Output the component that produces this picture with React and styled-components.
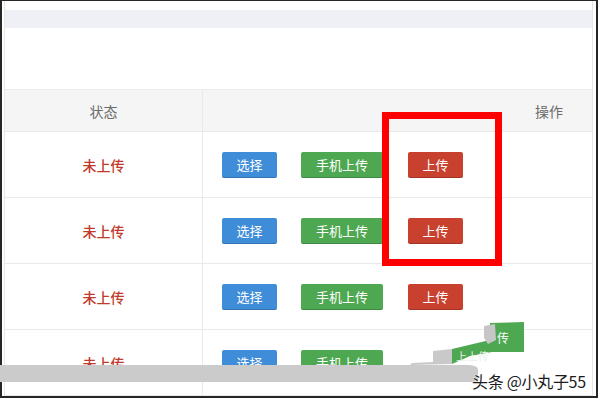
import React from "react"
import styled, { createGlobalStyle } from "styled-components"

const GlobalStyle = createGlobalStyle`
  html, body {
    margin: 0;
    width: 600px;
    height: 400px;
    overflow: hidden;
    background: #fff;
  }
  body {
    font-family: "Noto Sans CJK SC", "Noto Sans", sans-serif;
  }
`

const Frame = styled.div`
  position: relative;
  box-sizing: border-box;
  width: 598px;
  height: 398px;
  border: 2px solid #262626;
  border-top-width: 1px;
  padding: 0 3px 0 2px;
  background: #fff;
  display: flex;
`

const Panel = styled.div`
  flex: 1;
  display: flex;
  flex-direction: column;
  border-left: 1px solid #e6e6e6;
  border-right: 1px solid #e6e6e6;
  overflow: hidden;
`

const TopBand = styled.div`
  margin-top: 9px;
  height: 18px;
  background: #eff0f5;
`

const TableWrap = styled.div`
  margin-top: 61px;
  flex: 1;
  overflow: hidden;
`

const Row = styled.div`
  display: grid;
  grid-template-columns: 197px 690px;
  width: 887px;
  height: ${p => (p.$head ? "41px" : "65px")};
  background: ${p => (p.$head ? "#f5f5f5" : "#fff")};
  border-top: ${p => (p.$head ? "1px solid #ececec" : "none")};
  border-bottom: 1px solid #e9e9e9;
`

const Cell = styled.div`
  display: flex;
  align-items: center;
  justify-content: ${p => (p.$ops ? "flex-start" : "center")};
  padding-left: ${p => (p.$ops ? "19px" : "0")};
  border-left: ${p => (p.$ops ? "1px solid #e9e9e9" : "none")};
  gap: 24px;
`

const HeadText = styled.span`
  font-size: 14px;
  color: #6a6a6a;
  ${p => p.$ops && "margin-left: 313px;"}
`

const Status = styled.span`
  font-size: 14px;
  color: #bf3a2b;
  font-weight: 500;
`

const colors = {
  blue: "#3f8dd8",
  green: "#4ea751",
  red: "#c8412f",
}

const Button = styled.button`
  box-sizing: border-box;
  height: 26px;
  width: ${p => p.$w}px;
  padding: 0;
  margin-left: ${p => p.$shift || 0}px;
  border: none;
  border-radius: 2px;
  background: ${p => colors[p.$tone]};
  box-shadow: inset 0 -1px 0 rgba(0, 0, 0, 0.18);
  color: #fff;
  font-family: inherit;
  font-size: 13px;
  line-height: 26px;
`

const Highlight = styled.div`
  position: absolute;
  left: 380px;
  top: 111px;
  width: 120px;
  height: 154px;
  box-sizing: border-box;
  border: 7px solid #ff0000;
`

const GreyBar = styled.div`
  position: absolute;
  left: -2px;
  top: 364px;
  width: 478px;
  height: 17px;
  background: #cbcbcb;
  border-top-right-radius: 10px 4px;
`

const Smear = styled.svg`
  position: absolute;
  left: 398px;
  top: 317px;
  width: 130px;
  height: 50px;
  overflow: visible;
`

const Watermark = styled.div`
  position: absolute;
  left: 470px;
  top: 369px;
  font-size: 16px;
  line-height: 22px;
  letter-spacing: -0.3px;
  color: #1c1c1c;
  text-shadow: 0 0 2px #fff, 0 0 1px #fff;
  white-space: nowrap;
`

const rows = [true, true, true, false]

const App = () => (
  <>
    <GlobalStyle />
    <Frame>
      <Panel>
        <TopBand />
        <TableWrap>
          <Row $head>
            <Cell><HeadText>状态</HeadText></Cell>
            <Cell $ops><HeadText $ops>操作</HeadText></Cell>
          </Row>
          {rows.map((upload, i) => (
            <Row key={i}>
              <Cell><Status>未上传</Status></Cell>
              <Cell $ops>
                <Button $tone="blue" $w={55}>选择</Button>
                <Button $tone="green" $w={82}>手机上传</Button>
                {upload && <Button $tone="red" $w={55} $shift={1}>上传</Button>}
              </Cell>
            </Row>
          ))}
        </TableWrap>
      </Panel>
      <Highlight />
      <GreyBar />
      <Smear viewBox="0 0 130 50">
        <polygon points="33,33 52,31 52,46 10,47 12,45 33,44" fill="#c9c9c9" />
        <polygon points="52,31 90,22 92,34 70,38 52,46" fill="#4ea751" />
        <polygon points="90,5 124,4 124,34 90,34" fill="#4ea751" />
        <polygon points="84,8 95,6 96,22 88,26 84,20" fill="#c6c6c6" />
        <text x="97" y="25" fontSize="12" fill="#fff" fontFamily="Noto Sans CJK SC, sans-serif">传</text>
        <text x="56" y="43" fontSize="11" fill="#e9f3e9" fontFamily="Noto Sans CJK SC, sans-serif">上上传</text>
      </Smear>
      <Watermark>头条 @小丸子55</Watermark>
    </Frame>
  </>
)

export default App
